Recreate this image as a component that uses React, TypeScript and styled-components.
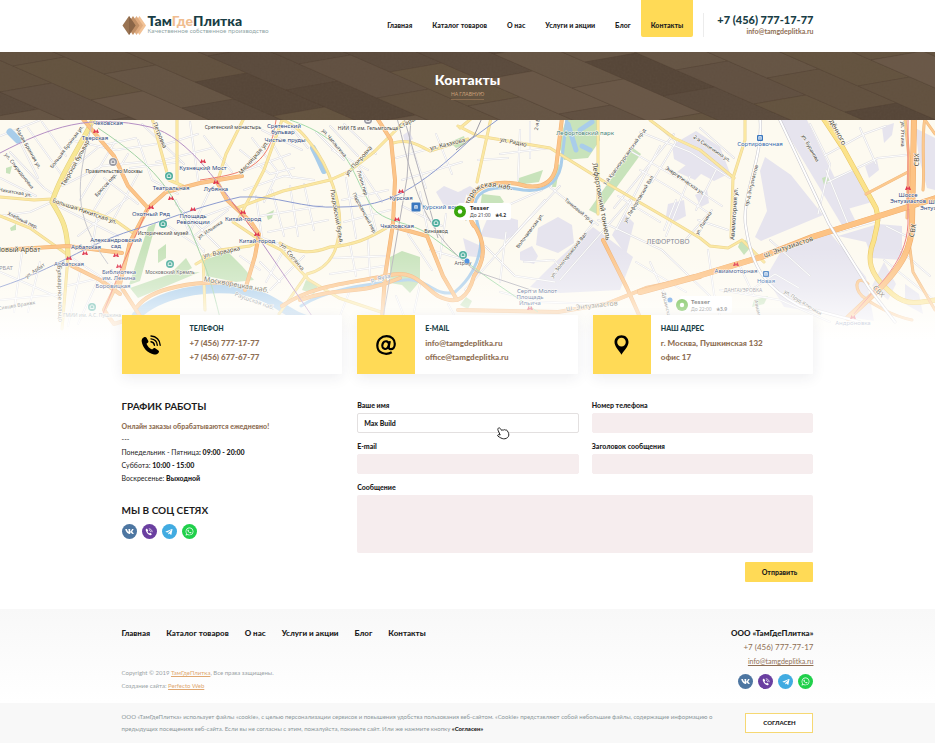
import React from 'react';
import styled, { createGlobalStyle } from 'styled-components';
import { FaVk, FaTelegramPlane, FaWhatsapp } from 'react-icons/fa';

const yellow = '#ffda56';
const brown = '#8f6f54';
const teal = '#183d45';

const GlobalStyle = createGlobalStyle`
  *, *::before, *::after { box-sizing: border-box; }
  body {
    margin: 0;
    background: #fff;
    color: #1c1c1c;
    font-family: Lato, "Open Sans", sans-serif;
    font-size: 7px;
    line-height: 13px;
  }
  h1, h2, h3, p, ul { margin: 0; padding: 0; }
  a { color: inherit; text-decoration: none; }
`;

/* ---------- shared layout ---------- */

const Page = styled.div`
  display: flex;
  flex-direction: column;
  min-height: 100vh;
`;

const gutter = '13%';

/* ---------- header ---------- */

const Header = styled.header`
  display: flex;
  align-items: flex-start;
  justify-content: space-between;
  height: 52px;
  padding: 0 ${gutter};
`;

const Brand = styled.a`
  display: flex;
  align-items: center;
  gap: 2px;
  padding-top: 14px;
`;

const BrandText = styled.span`
  display: flex;
  flex-direction: column;
`;

const BrandName = styled.strong`
  font-size: 14px;
  line-height: 13px;
  font-weight: 900;
  color: ${teal};
`;

const BrandAccent = styled.span`
  color: #f0bd90;
`;

const Tagline = styled.span`
  font-family: "Noto Sans", sans-serif;
  font-size: 6px;
  line-height: 9px;
  color: #8fa5a5;
`;

const HeaderRight = styled.div`
  display: flex;
  align-items: flex-start;
  gap: 10px;
`;

const Nav = styled.nav`
  display: flex;
`;

const NavLink = styled.a<{ $active?: boolean }>`
  padding: 19px 10px 5px;
  height: 37px;
  font-weight: 900;
  line-height: 13px;
  border-radius: 0 0 2px 2px;
  background: ${p => (p.$active ? yellow : 'transparent')};
`;

const HeaderContact = styled.address`
  display: flex;
  flex-direction: column;
  align-items: flex-end;
  margin-top: 13px;
  padding-left: 13px;
  border-left: 1px solid #ececec;
  font-style: normal;
  height: 24px;
`;

const HeaderPhone = styled.a`
  font-size: 11px;
  line-height: 14px;
  font-weight: 900;
  color: ${teal};
`;

const HeaderMail = styled.a`
  line-height: 9px;
  font-weight: 700;
  color: ${brown};
`;

/* ---------- title band ---------- */

const Hero = styled.section`
  display: grid;
  height: 68px;
  background: #5e4d3e;
  overflow: hidden;
  > * { grid-area: 1 / 1; }
`;

const HeroTexture = styled.svg`
  width: 100%;
  height: 68px;
`;

const HeroContent = styled.div`
  display: flex;
  flex-direction: column;
  align-items: center;
  padding-top: 18px;
  z-index: 1;
`;

const HeroTitle = styled.h1`
  font-size: 14px;
  line-height: 20px;
  font-weight: 900;
  color: #fff;
`;

const HeroLink = styled.a`
  font-size: 5px;
  line-height: 9px;
  color: #c9a07a;
  border-bottom: 1px solid #8a6c50;
`;

/* ---------- map ---------- */

const MapFrame = styled.section`
  height: 220px;
  overflow: hidden;
`;

const MapSvg = styled.svg`
  display: block;
  width: 100%;
  height: 220px;
  font-family: "Noto Sans", sans-serif;
`;

/* ---------- contact cards ---------- */

const Cards = styled.section`
  position: relative;
  display: grid;
  grid-template-columns: repeat(3, 1fr);
  gap: 15px;
  margin-top: -25px;
  padding: 0 ${gutter};
`;

const Card = styled.article`
  display: flex;
  min-height: 59px;
  background: #fff;
  border-radius: 1px;
  box-shadow: 0 4px 14px rgba(40, 40, 60, 0.08);
`;

const CardIcon = styled.div`
  display: flex;
  align-items: center;
  justify-content: center;
  width: 58px;
  background: ${yellow};
`;

const CardBody = styled.div`
  display: flex;
  flex-direction: column;
  padding: 6px 10px;
  font-size: 8px;
  line-height: 14px;
  font-weight: 900;
  color: ${brown};
`;

const CardTitle = styled.h3`
  margin-bottom: 1px;
  font-size: 7px;
  line-height: 14px;
  font-weight: 900;
  color: ${teal};
`;

/* ---------- main ---------- */

const Main = styled.main`
  display: grid;
  grid-template-columns: repeat(3, 1fr);
  gap: 15px;
  padding: 25px ${gutter} 27px;
`;

const Info = styled.section`
  display: flex;
  flex-direction: column;
`;

const SectionTitle = styled.h2`
  font-size: 10px;
  line-height: 15px;
  font-weight: 700;
  margin-bottom: 6px;
  color: #1c1c1c;
`;

const Schedule = styled.div`
  margin-bottom: 18px;
  font-size: 7px;
  line-height: 13px;
  b { font-weight: 900; }
`;

const Highlight = styled.p`
  font-weight: 900;
  color: ${brown};
`;

const Socials = styled.div`
  display: flex;
  gap: 5px;
`;

const SocialLink = styled.a<{ $color: string }>`
  display: flex;
  align-items: center;
  justify-content: center;
  width: 15px;
  height: 15px;
  border-radius: 50%;
  color: #fff;
  background: ${p => p.$color};
`;

const Form = styled.form`
  grid-column: span 2;
  display: grid;
  grid-template-columns: 1fr 1fr;
  column-gap: 13px;
  row-gap: 7px;
`;

const Field = styled.div<{ $wide?: boolean }>`
  grid-column: ${p => (p.$wide ? '1 / -1' : 'auto')};
  display: flex;
  flex-direction: column;
`;

const Label = styled.label`
  font-size: 7px;
  line-height: 12px;
  font-weight: 900;
  margin-bottom: 2px;
`;

const Input = styled.input`
  width: 100%;
  height: 20px;
  padding: 0 6px;
  border: 1px solid #f6edee;
  border-radius: 2px;
  background: #f6edee;
  font: 900 7px/13px Lato, sans-serif;
  color: #1c1c1c;
  outline: none;
  &:not(:placeholder-shown) {
    background: #fff;
    border-color: #e3e0e0;
  }
`;

const NameBox = styled.div`
  position: relative;
`;

const HandCursor = styled.svg`
  position: absolute;
  left: 63%;
  top: 14px;
`;

const TextArea = styled.textarea`
  width: 100%;
  height: 58px;
  padding: 6px;
  border: 0;
  border-radius: 2px;
  background: #f6edee;
  font: 700 7px/13px Lato, sans-serif;
  resize: none;
  outline: none;
`;

const Submit = styled.button`
  grid-column: 2;
  justify-self: end;
  width: 68px;
  height: 20px;
  margin-top: 2px;
  border: 0;
  border-radius: 1px;
  background: ${yellow};
  color: #1c1c1c;
  font: 900 7px/13px Lato, sans-serif;
`;

/* ---------- footer ---------- */

const Footer = styled.footer`
  display: flex;
  justify-content: space-between;
  height: 94px;
  padding: 17px ${gutter} 0;
  background: linear-gradient(#f8f8f8, #fff);
`;

const FooterLeft = styled.div`
  display: flex;
  flex-direction: column;
  justify-content: space-between;
  padding-bottom: 11px;
`;

const FooterNav = styled.nav`
  display: flex;
  gap: 16px;
  font-size: 8px;
  line-height: 14px;
  font-weight: 900;
`;

const Legal = styled.div`
  font-size: 6px;
  line-height: 13px;
  color: #9aa3a5;
  a { color: #e0a871; text-decoration: underline; }
`;

const FooterContact = styled.address`
  display: flex;
  flex-direction: column;
  align-items: flex-end;
  font-style: normal;
`;

const Company = styled.strong`
  font-size: 8px;
  line-height: 14px;
  font-weight: 900;
`;

const FooterPhone = styled.a`
  font-size: 8px;
  line-height: 14px;
  color: ${brown};
`;

const FooterMail = styled.a`
  margin-bottom: 6px;
  line-height: 14px;
  color: ${brown};
  text-decoration: underline;
`;

const CookieBar = styled.section`
  display: flex;
  flex: 1;
  align-items: center;
  justify-content: space-between;
  gap: 20px;
  min-height: 40px;
  padding: 0 ${gutter};
  background: #f8f8f8;
`;

const CookieText = styled.p`
  flex: 1;
  font-size: 6px;
  line-height: 12px;
  color: #8b979a;
  b { color: #1c1c1c; font-weight: 900; }
`;

const Agree = styled.button`
  width: 68px;
  height: 20px;
  border: 1px solid #f6d873;
  background: #fff;
  color: #1c1c1c;
  font: 900 6px/12px Lato, sans-serif;
`;

/* ---------- drawings ---------- */

const LogoMark = () => (
  <svg width="24" height="21" viewBox="0 0 24 21" aria-hidden="true">
    <path d="M17.500 1 24 10.500 17.500 20 11 10.500z" fill="#f2c296" />
    <path d="M14.500 1 21 10.500 14.500 20 8 10.500z" fill="#e0ac80" />
    <path d="M11 1 17.500 10.500 11 20 4.500 10.500z" fill="#c08f66" />
    <path d="M7 1 13.500 10.500 7 20 .5 10.500z" fill="#9a7453" />
    <path d="M7 1 13.500 10.500 7 20z" fill="#8a6547" />
  </svg>
);

const PhoneIcon = () => (
  <svg width="20" height="20" viewBox="0 0 20 20" aria-hidden="true">
    <path
      d="M3 2.200C1.200 3 .4 4.600.7 6.500c.9 6.300 6 11.800 12.300 13 1.900.4 3.700-.4 4.700-2 .5-.8.4-1.500-.3-2l-3.200-2.300c-.7-.5-1.400-.4-2 .2l-1.100 1.200c-2.600-1.100-4.600-3.200-5.600-5.800l1.300-1c.7-.5.8-1.200.4-2L5.500 2.700C5.100 1.900 4 1.700 3 2.200z"
      fill="#000"
    />
    <g fill="none" stroke="#000" strokeWidth="1.400" strokeLinecap="round">
      <path d="M10 1c5.200.3 9 4 9.200 9.200" />
      <path d="M10 3.900c3.600.3 6 2.700 6.300 6.300" />
      <path d="M10 6.800c2 .3 3.200 1.400 3.400 3.400" />
    </g>
  </svg>
);

const AtIcon = () => (
  <svg width="20" height="20" viewBox="0 0 20 20" aria-hidden="true" fill="none" stroke="#000">
    <path
      d="M15.800 17.200C10 20.600 1.300 18.400 1.300 10.400 1.300 5 5.300 1.200 10.600 1.200c4.800 0 8.200 3.100 8.200 7.500 0 3.400-1.700 5.500-4 5.500-1.700 0-2.300-1.100-2-2.800l1-5.300"
      strokeWidth="2.200"
    />
    <ellipse cx="9.600" cy="10.100" rx="3.200" ry="3.900" transform="rotate(18 9.600 10.100)" strokeWidth="2.200" />
  </svg>
);

const PinIcon = () => (
  <svg width="15" height="20" viewBox="0 0 15 20" aria-hidden="true">
    <path
      fillRule="evenodd"
      d="M7.500.2C3.500.2.500 3.100.500 7c0 4.700 4.500 8.200 7 12.800C10 15.200 14.500 11.700 14.500 7c0-3.900-3-6.800-7-6.800zm0 2.600a4.300 4.300 0 1 1 0 8.600 4.300 4.300 0 0 1 0-8.600z"
      fill="#000"
    />
  </svg>
);

const ViberGlyph = () => (
  <svg width="8" height="8" viewBox="0 0 20 20" aria-hidden="true">
    <path
      d="M3.400 2C2 3 1.500 4 2 6c1.600 5.600 5.600 10 11 12 1.600.5 2.600-.1 3.600-1.600.6-1 .5-1.600-.3-2.200l-2.600-1.900c-.8-.5-1.400-.3-2 .4l-.9 1c-2.200-.9-3.900-2.800-4.700-5l1.100-.8c.7-.5.9-1.200.4-2L5.700 2.500C5.200 1.700 4.200 1.400 3.400 2z"
      fill="#fff"
    />
    <g fill="none" stroke="#fff" strokeWidth="1.800" strokeLinecap="round">
      <path d="M10.500 2c4.200.3 7.200 3.200 7.400 7.500" />
      <path d="M11 5.800c2 .3 3 1.400 3.200 3.400" />
    </g>
  </svg>
);

const SocialRow = () => (
  <Socials>
    <SocialLink href="#vk" aria-label="VK" $color="#4d76a1"><FaVk size={9} /></SocialLink>
    <SocialLink href="#viber" aria-label="Viber" $color="#6a3fa0"><ViberGlyph /></SocialLink>
    <SocialLink href="#telegram" aria-label="Telegram" $color="#41abe1"><FaTelegramPlane size={8} /></SocialLink>
    <SocialLink href="#whatsapp" aria-label="WhatsApp" $color="#20d04b"><FaWhatsapp size={9} /></SocialLink>
  </Socials>
);

const tones = ['#665544', '#5a4a3c', '#62513f', '#6a5847', '#554537', '#615041', '#64533f'];

/* Slanted paving stones: each strip runs down to the right, every other one shifted by half a stone. */
const stones = Array.from({ length: 20 }, (_, j) => j - 3).flatMap(j => {
  const first = Math.floor((9 * j - 110) / 34);
  return Array.from({ length: 7 }, (_, k) => {
    const i = first + k + (j % 2 ? 0.5 : 0);
    return { x: Math.round(52 * j + 78 * i), y: Math.round(40 - 9 * j + 34 * i), tone: Math.abs(j * 5 + k * 3 + ((j * k) % 4)) % tones.length };
  });
});

const TileTexture = () => (
  <HeroTexture viewBox="0 0 935 68" preserveAspectRatio="xMidYMid slice" aria-hidden="true">
    <defs>
      <filter id="grain" x="0" y="0" width="100%" height="100%">
        <feTurbulence type="fractalNoise" baseFrequency="0.5" numOctaves="2" seed="4" />
        <feColorMatrix values="0 0 0 0 0.15  0 0 0 0 0.11  0 0 0 0 0.08  0 0 0 0.5 0" />
      </filter>
    </defs>
    {stones.map(s => (
      <path key={`${s.x} ${s.y}`} d={`M${s.x} ${s.y}l52 -9 78 34 -52 9z`} fill={tones[s.tone]} stroke="#4c3d30" strokeOpacity="0.5" strokeWidth="0.600" />
    ))}
    <rect width="935" height="68" filter="url(#grain)" opacity="0.450" />
  </HeroTexture>
);

const lavender = [
  'M593 227l40 30-13 33-60 3-30-6 18-18z',
  'M538 228l20-11 14 8 2 18-16 10-22-8z',
  'M520 252l12-6 6 10-4 8-14-4z',
  'M490 212l28 8 0 12-12 8-26-4z',
  'M463 238l18 8 4 12-18-2z',
  'M672 145l24-14 24 16 10 26-16 8-40-22z',
  'M668 204l16-4 2 16-12 6-8-6z',
  'M612 235l12-22 10 10-8 32z',
  'M765 157l26 18 32 40-62 26-6-4 12-26-7-40z',
  'M779 120h28l48 100-12 7z',
  'M832 178l26-10 14 34-28 8z',
  'M838 236l40-12 24 2v34l-30-2-6-16z',
  'M780 253l50-20 36 44 8 44-90-14-18-30z',
  'M865 166l12-6 2 10-10 8z',
  'M882 127l12-4-2 12-8 8z',
  'M915 128l20 10v52l-8-2-8-30z',
  'M884 262l12 22-8 16-16-14z',
  'M905 284l14 10 4 20-18-10z',
  'M436 192l8-6 14 6 10-4-4 16-20 2z',
  'M462 190l8-4 6 4-6 8z',
  'M695 158l16 6-16 16-18-8z',
  'M695 195l12-6 2 14-8 4z',
  'M403 135l6-4 4 8-8 4z',
];

const greens = [
  'M566 120h32l2 20-12 18-24 2-6-16z',
  'M633 148l8 6-44 60-8-4z',
  'M519 178l24-8-4 12-22 3z',
  'M482 194l18 2 4 6-14 8-10-2z',
  'M148 227l8-4-16 58-11 4z',
  'M158 250l8-6 0 14-8 5z',
  'M170 274l16-16 6 10-20 12z',
  'M130 288l40-14 30-2-62 26z',
  'M204 260l24-8 14 14 12 14-18 2-30-6z',
  'M390 257l12-6 18 6 0 24-10 12-8-8-12-2z',
  'M306 280l12 6-4 8-12-4z',
  'M266 214l8-4-2 8-4 2z',
  'M822 178l6-2 2 6-6 3z',
  'M740 242l6-2 4 8-6 7-6-8z',
  'M460 305l6-8 6 4-4 8z',
  'M754 300l14-4-4 8-12 3z',
  'M6 168l6-2-2 8-4-1z',
  'M10 228l6-4 0 6-5 1z',
  'M555 163l5 2-4 22-4 0z',
  'M450 142l14-6 2 8-10 4z',
];

const minorRoads = [
  'M0 136L40 120', 'M10 152l34 36 12 8', 'M18 138l20 40', 'M28 128l36 50', 'M42 122l24 34', 'M0 178l36 18', 'M0 216l30-4 22-10',
  'M70 170l30-24 36-8', 'M62 186l40-20 40-4', 'M80 200l36-60', 'M94 210l34-56', 'M112 222l26-48', 'M70 140l46 10 40-6', 'M58 206l60 30',
  'M78 236l50-38', 'M92 248l6-36', 'M104 178l34 26', 'M138 140l14 40 26 14', 'M142 124l42 40', 'M160 146l38-12', 'M190 122l8 58', 'M204 136l28 36',
  'M156 162l56-14', 'M130 168l50-6', 'M210 190l-20 42 14 20', 'M176 200l14 34', 'M188 222l44-16', 'M194 236l34-26', 'M168 226l36 24', 'M176 204l46 46',
  'M72 258l40 26', 'M66 286l34-8', 'M40 262l-12 50', 'M22 252l-8 60', 'M0 272l60 26', 'M0 300l62-6', 'M80 272l-12 54', 'M98 280l-20 44', 'M118 286l24 30',
  'M240 150l30 24 24-6', 'M252 138l26 34-14 30', 'M272 142l20 36', 'M246 170l44-16', 'M262 130l40 20', 'M244 190l40-14 30 4', 'M256 196l6 42 40 14', 'M272 190l12 46',
  'M290 186l8 50', 'M304 184l10 46', 'M260 216l62-10', 'M268 232l60-12', 'M316 132l28 28', 'M330 126l28 30', 'M344 124l32 30', 'M332 150l36 20', 'M358 166l24 36',
  'M346 178l10 60', 'M362 174l14 56', 'M342 200l46-10', 'M344 222l46-12', 'M350 244l6 32', 'M368 240l2 36', 'M332 258l54-2', 'M330 274l54-8', 'M286 246l-20 36', 'M304 256l-34 34',
  'M308 148l-18 -22', 'M396 158l50-14', 'M402 180l60-18', 'M410 142l16 46', 'M436 134l16 40', 'M402 206l40 20', 'M420 192l8 40', 'M408 234l24 36', 'M446 214l-6 44', 'M430 250l36 10',
  'M520 130l-2 50', 'M530 122v36', 'M500 154l50-6', 'M478 160l30-2', 'M506 206l36-16', 'M500 250l60-64', 'M506 232l-6 50', 'M485 246l30 30 40 6', 'M550 187l48 38', 'M545 200l-80 90',
  'M524 262l30-2 6 8', 'M560 280l70-80', 'M598 220l64 30 50 48', 'M614 208l60-74', 'M594 222l-40 50', 'M640 170l34 20 36 24', 'M618 196l42 26', 'M660 146l-44 84', 'M676 200l-12 30',
  'M632 152l60 34 30 20', 'M640 132l50 20 40 26', 'M656 124l20 18-24 40', 'M690 176l-24 60', 'M650 262l18 40', 'M636 262l50 30', 'M712 210l-30 34',
  'M700 128l34 30', 'M696 210l20-40', 'M698 220l30 10', 'M708 250l6 44 8 30', 'M738 262l16 34', 'M745 294l30-20 24 14', 'M770 240l40 36', 'M824 156l40-22 22-8', 'M828 182l50-24 38-4',
  'M826 170l22 54', 'M818 214l12-50-20-40', 'M860 128l16 36', 'M838 232l42 -12', 'M886 226l20 10', 'M884 260l50 40', 'M900 250l30 26', 'M720 290l60 10 50 22', 'M500 292l40 10 60 2',
  'M396 296l8 20', 'M420 284l-6 28', 'M448 304l10 18', 'M350 290l-10 26', 'M260 262l20 20', 'M240 256l20 14',
];

const yellowRoads = [
  'M94 118C78 150 60 176 52 202c8 14 16 22 16 55l-6 72',
  'M0 197l34 3 18-1', 'M52 202l38 9 26 10 17 12', 'M0 216l30 12 38 27',
  'M177 118v64', 'M152 118l17 62 14 6', 'M244 118l-18 36-8 26', 'M203 256l2 54', 'M196 264l24-14 30-4 12-6',
  'M283 120c16 8 20 14 28 24 18 22 32 62 28 88-2 24-14 38-32 42l-28 40',
  'M237 208l46-17 47-11 18-8 26-20 30-30', 'M280 243c18 12 34 10 50 4 24-2 38-8 58-20',
  'M233 222l24 16 24 12 28 30 30 18 42 14', 'M282 120l-18 50-26 50', 'M393 143c14-4 22 0 37 8l38-12',
  'M458 126l20 10 72 12 58 36 62 36 30 18 10 8 18 2 14-8 22 22', 'M491 118l-14 64', 'M598 118v96',
  'M650 120l24 18 26 12 34 28', 'M745 118v22l-12 38-2 60', 'M460 128l12-10',
];

const wideYellow = ['M823 118l20 30 33 60c4 14 0 20-2 32-8 20-4 34 14 50 18 18 30 12 48 10'];

const orangeRoads = [
  'M82 118l32 38 14 30 20 22', 'M242 176l-42 7-34 9-18 16-18 34-10 42', 'M0 250l68-4 54 7', 'M68 264l32 16 20 14', 'M104 310l14-28 22 34-26 8z',
  'M217 182l10 18 24 22 8 12-4 22-10 34', 'M137 307c14-20 60-26 94-24',
  'M377 118l14 22 4 40-2 44-8 52-3 44', 'M391 226l36 10 16 40 14 24', 'M282 306c30-20 60-22 104-30 30-8 36 10 52 20 20 10 30 2 36-20 14-20 10-38-2-54',
  'M562 118l-6 50c-4 16-16 20-30 18-20-6-42-4-52 8-6 14-4 28 0 32',
  'M603 240l24 48 16 36', 'M458 310l100 2 48-8 40-16 54-11',
  'M300 300c40-14 60-4 100-22',
];

const wideOrange = ['M640 292l55-15 66-20 51-20 64-20 60-19', 'M914 118l-2 104c0 30-14 48-34 68l-30 28'];

const sideOrange = ['M905 118l4 40-2 60', 'M925 118c-4 20 0 50-2 72', 'M909 242l4 30 22 38', 'M868 284c-10-10-16 2-6 12 10 8 30 20 50 24', 'M866 194l42-22', 'M925 120l10 14'];

const metro = [
  [96, 131], [203, 161], [216, 182], [171, 198], [151, 207], [193, 209], [243, 212], [257, 234], [69, 258], [85, 253], [116, 255], [119, 266],
  [401, 191], [397, 219], [736, 264], [908, 188], [853, 317], [530, 308],
];

type LabelSpec = { t: string; x: number; y: number; c?: string; s?: number; r?: number };
const street = '#4d4630';
const station = '#2c477f';
const district = '#85858f';

const labels: LabelSpec[] = [
  { t: 'Чеховская', x: 108, y: 125, c: station }, { t: 'Тверская', x: 95, y: 140, c: station },
  { t: 'Кузнецкий Мост', x: 203, y: 170, c: station }, { t: 'Лубянка', x: 216, y: 191, c: station },
  { t: 'Театральная', x: 171, y: 190, c: station }, { t: 'Охотный Ряд', x: 151, y: 216, c: station },
  { t: 'Площадь', x: 193, y: 218, c: station }, { t: 'Революции', x: 193, y: 224, c: station },
  { t: 'Китай-город', x: 243, y: 221, c: station }, { t: 'Китай-город', x: 257, y: 243, c: station },
  { t: 'Александровский', x: 116, y: 242, c: station }, { t: 'сад', x: 116, y: 248, c: station },
  { t: 'Арбатская', x: 86, y: 249, c: station }, { t: 'Арбатская', x: 69, y: 266, c: station },
  { t: 'Библиотека', x: 119, y: 274, c: station }, { t: 'им. Ленина', x: 119, y: 280, c: station }, { t: 'Боровицкая', x: 113, y: 288, c: station },
  { t: 'Сретенский', x: 284, y: 128, c: station }, { t: 'бульвар', x: 283, y: 134, c: station }, { t: 'Чистые пруды', x: 285, y: 142, c: station },
  { t: 'Курская', x: 401, y: 200, c: station }, { t: 'Чкаловская', x: 397, y: 228, c: station }, { t: 'Курский вокзал', x: 445, y: 209, c: '#2f68ad' },
  { t: 'Сортировочная', x: 760, y: 146, c: '#2f68ad' }, { t: 'Авиамоторная', x: 736, y: 273, c: station }, { t: 'Новая', x: 766, y: 283, c: '#2f68ad' },
  { t: 'Шоссе', x: 908, y: 197, c: station }, { t: 'Энтузиастов', x: 908, y: 203, c: station }, { t: 'Шоссе', x: 938, y: 204, c: station }, { t: 'Энтузиастов', x: 938, y: 210, c: station },
  { t: 'Серп и Молот', x: 537, y: 293, c: station }, { t: 'Площадь', x: 530, y: 299, c: station }, { t: 'Ильича', x: 530, y: 305, c: station },
  { t: 'Андроновка', x: 853, y: 325, c: station },
  { t: 'Сретенский монастырь', x: 233, y: 129, s: 5 }, { t: 'НИИ ГБ им. Гельмгольца', x: 368, y: 130, s: 5 },
  { t: 'Правительство Москвы', x: 114, y: 173, s: 5 }, { t: 'Исторический музей', x: 163, y: 235, s: 5 }, { t: 'Московский Кремль', x: 170, y: 274, s: 5 },
  { t: 'ГМИИ им. А.С. Пушкина', x: 92, y: 317, s: 5, c: '#6f7f86' }, { t: 'Винзавод', x: 436, y: 233, s: 5 }, { t: 'Artplay', x: 463, y: 265, s: 5 },
  { t: 'ЛЕФОРТОВО', x: 668, y: 244, c: district, s: 7 }, { t: 'ДАНГАУЭРОВКА', x: 743, y: 292, c: district, s: 5 }, { t: 'АРБАТ', x: 4, y: 270, c: district },
  { t: 'Новый Арбат', x: 18, y: 252, c: street, s: 7 }, { t: 'ул. Спиридоновка', x: 18, y: 172, r: 52, s: 5 }, { t: 'Малая Бронная ул.', x: 27, y: 149, r: 60, s: 5 },
  { t: 'Большая Бронная ул.', x: 68, y: 148, r: -53, s: 5 }, { t: 'Тверской бульвар', x: 77, y: 164, r: -61, c: street }, { t: 'Никитская ул.', x: 15, y: 194, r: 10, s: 5 },
  { t: 'Хлебный пер.', x: 22, y: 222, r: 26, s: 5 }, { t: 'Большая Никитская ул.', x: 84, y: 213, r: 19, c: street }, { t: 'Брюсов пер.', x: 107, y: 186, r: -48, s: 5 },
  { t: 'Петровка', x: 158, y: 136, r: 68, c: street }, { t: 'Мясницкая ул.', x: 255, y: 159, r: -49, c: street }, { t: 'ул. Ильинка', x: 211, y: 231, r: -34, s: 5 },
  { t: 'ул. Варварка', x: 222, y: 254, r: -12, c: street }, { t: 'ул. Арбат', x: 36, y: 272, r: -34, s: 5 }, { t: 'Москворецкая наб.', x: 236, y: 287, r: 10, c: street, s: 7 },
  { t: 'Раушская наб.', x: 254, y: 303, r: 20, c: '#777e86' }, { t: 'Бульварное кольцо', x: 58, y: 294, r: 89, c: street }, { t: 'Сивцев Вражек', x: 17, y: 307, r: -9, s: 5 },
  { t: 'ул. Солянка', x: 291, y: 258, r: 51, c: street }, { t: 'Покровский бульв.', x: 335, y: 217, r: 80, c: street }, { t: 'ул. Покровка', x: 360, y: 162, r: -48, c: street },
  { t: 'ул. Чаплыгина', x: 333, y: 144, r: 50, s: 5 }, { t: 'Лялин пер.', x: 361, y: 184, r: 73, s: 5 }, { t: 'Подсосенский пер.', x: 363, y: 214, r: 62, s: 5 },
  { t: 'ул. Казакова', x: 448, y: 146, r: -14, c: street }, { t: 'р. Яуза', x: 381, y: 280, r: -14, c: '#6c85ad' }, { t: 'Старая Басманная', x: 424, y: 116, r: -28, c: street },
  { t: 'ул. Радио', x: 513, y: 144, r: 12, c: street }, { t: '2-я Бауманская', x: 541, y: 112, r: -80, s: 5 }, { t: 'Лефортовский парк', x: 585, y: 135, c: '#3c8076' },
  { t: 'Лефортовский тоннель', x: 599, y: 202, r: 80, c: street, s: 7 },
  { t: '1-й Краснокурсантский пр-д', x: 626, y: 158, r: -54, s: 5 }, { t: 'Танковый пр-д', x: 578, y: 212, r: 40, s: 5 }, { t: 'Волочаевская ул.', x: 531, y: 232, r: -53, s: 5 },
  { t: 'ул. Золоторожский Вал', x: 570, y: 256, r: -52, s: 5 }, { t: 'ул. Лефортовский Вал', x: 640, y: 200, r: -59, s: 5 }, { t: 'Энергетическая ул.', x: 684, y: 182, r: 35, s: 5 },
  { t: 'ш. Энтузиастов', x: 592, y: 308, r: -6, c: street, s: 7 }, { t: 'ш. Энтузиастов', x: 789, y: 249, r: -19, c: street, s: 7 }, { t: '2-я Синичкина ул.', x: 711, y: 150, r: 34, s: 5 },
  { t: 'ул. Лапина', x: 705, y: 224, r: -58, s: 5 }, { t: 'Авиамоторная ул.', x: 736, y: 214, r: -86 }, { t: 'пр-д Энтузиастов', x: 753, y: 186, r: -76, s: 5 },
  { t: 'ул. Буракова', x: 809, y: 149, r: 61, s: 5 }, { t: 'Будённого', x: 834, y: 130, r: 62, c: street, s: 7 }, { t: 'ул. Уткина', x: 901, y: 134, r: 90, s: 5 },
  { t: 'СВХ', x: 919, y: 160, r: -88, c: street, s: 7 }, { t: 'СВХ', x: 915, y: 231, r: -80, c: street, s: 7 }, { t: 'СВХ', x: 877, y: 293, r: 48, c: street, s: 7 },
  { t: 'ул. Пруд-Ключики', x: 802, y: 304, r: 32, s: 5 }, { t: 'Душинская', x: 665, y: 306, r: 78, s: 5 }, { t: 'Авиамоторная', x: 758, y: 318, r: 78, s: 5 },
];

const Poi = ({ x, y, color = '#4fae9d' }: { x: number; y: number; color?: string }) => (
  <g transform={`translate(${x} ${y})`}>
    <circle r="4.500" fill="#fff" />
    <circle r="4" fill={color} />
    <path d="M-1.800 1.500v-2.500l1.800-1.200 1.800 1.200v2.500z" fill="none" stroke="#fff" strokeWidth="0.800" />
  </g>
);

const RailStop = ({ x, y, s = 6 }: { x: number; y: number; s?: number }) => (
  <g transform={`translate(${x} ${y})`}>
    <rect x={-s / 2} y={-s / 2} width={s} height={s} rx="1" fill="#3b78bf" />
    <path d="M-1.300-1.500h2.600v2.500h-2.600zM-1.300-.2h2.600M-1.500 2l.6-.8M1.500 2l-.6-.8" fill="none" stroke="#fff" strokeWidth="0.700" />
  </g>
);

const Roads = ({ d, w, fill, edge }: { d: string[]; w: number; fill: string; edge: string }) => (
  <g fill="none" strokeLinejoin="round" strokeLinecap="round">
    {d.map((p, i) => <path key={`e${i}`} d={p} stroke={edge} strokeWidth={w + 1} />)}
    {d.map((p, i) => <path key={`f${i}`} d={p} stroke={fill} strokeWidth={w} />)}
  </g>
);

const CityMap = () => (
  <MapSvg viewBox="0 120 935 220" preserveAspectRatio="xMidYMin slice" role="img" aria-label="Карта Москвы">
    <defs>
      <linearGradient id="fade" x1="0" y1="0" x2="0" y2="1">
        <stop offset="0.580" stopColor="#fff" stopOpacity="0" />
        <stop offset="0.750" stopColor="#fff" stopOpacity="0.300" />
        <stop offset="0.880" stopColor="#fff" stopOpacity="0.650" />
        <stop offset="1" stopColor="#fff" stopOpacity="1" />
      </linearGradient>
      <path id="embankment" d="M466 244C464 205 472 184 494 187L512 190" />
    </defs>
    <rect y="120" width="935" height="220" fill="#fdfaf0" />
    {lavender.map(d => <path key={d} d={d} fill="#e6e4ee" />)}
    {greens.map(d => <path key={d} d={d} fill="#c8e3bb" />)}
    <Roads d={minorRoads} w={1} fill="#fff" edge="#e0dfe3" />
    <g fill="none" stroke="#a9cdea" strokeLinecap="round">
      <path d="M136 316c24-24 70-30 104-26 40 8 44 26 76 32" strokeWidth="9" />
      <path d="M567 118l-6 48c-4 20-20 26-38 24-30-6-46 0-48 14 0 16 4 24 6 34 0 26-14 44-26 54-20 6-26-14-50-12-40 4-80 10-104 26" strokeWidth="3" />
      <path d="M313 148l5 10 6 13" strokeWidth="6" />
      <path d="M10 132l8 8" strokeWidth="7" />
      <path d="M568 124l8 26M582 146l8 4M580 130l12-8" strokeWidth="5" />
    </g>
    <Roads d={yellowRoads} w={2} fill="#fbe8a2" edge="#ecd491" />
    <Roads d={wideYellow} w={4} fill="#fbe38b" edge="#e8c566" />
    <Roads d={['M94 118C78 150 60 176 52 202c8 14 16 22 16 55']} w={4} fill="#f8e795" edge="#e2cf7a" />
    <Roads d={orangeRoads} w={3} fill="#fcc58a" edge="#f0b173" />
    <Roads d={sideOrange} w={2} fill="#fcc98f" edge="#eeb77c" />
    <Roads d={wideOrange} w={5} fill="#fdc384" edge="#eeaa69" />
    <g fill="none" strokeWidth="1">
      <path d="M0 287c60-20 80-40 133-57 40-12 60-22 107-33 40-2 60 12 100 10 50 0 80-20 130-67l30-22" stroke="#8c9bd0" />
      <path d="M0 153c50-26 90-40 150-26 40 10 70 60 104 104l60 88" stroke="#b58fc4" />
      <path d="M98 128c60 40 70 60 92 100 20 50 20 50 30 90" stroke="#a3d3a5" />
      <path d="M290 120c60 20 60 50 78 80 10 24 40 20 60 34l60 44 50 34" stroke="#a5dbaa" />
      <path d="M232 202l24 32M200 180c40-6 70-10 76-60M148 208l-26 58-20 50" stroke="#ef7d6c" />
      <path d="M908 118v106c-2 40-30 60-54 90" stroke="#ef8080" />
      <path d="M92 124c-16 60-20 90 16 140" stroke="#c9c9cf" />
      <path d="M397 118c16 60 20 110 80 154l60 20M411 118l-4 60-24 140M404 118l34 120" stroke="#b5b3ba" />
      <path d="M456 150l18-14 8-18" stroke="#9a98a2" />
    </g>
    <Roads d={['M779 118l50 106 40 64 26 34', 'M760 118c4 40-20 80-14 110 6 40 20 60 54 78l60 16']} w={2} fill="#fff" edge="#c6c5cc" />
    <g stroke="#fffdf6" strokeWidth="1" paintOrder="stroke" strokeLinejoin="round" textAnchor="middle">
      {labels.map((l, i) => (
        <text key={i} fontSize={l.s ?? 6} fill={l.c ?? '#3c3c3c'} transform={`translate(${l.x} ${l.y}) rotate(${l.r ?? 0})`}>{l.t}</text>
      ))}
    </g>
    <text fontSize="7" fill={street} stroke="#fffdf6" strokeWidth="1" paintOrder="stroke" textAnchor="end">
      <textPath href="#embankment" startOffset="100%">Золоторожская наб.</textPath>
    </text>
    {metro.map(([x, y]) => (
      <path key={`${x}-${y}`} transform={`translate(${x} ${y})`} d="M-3 2l1.600-4L0 .4l1.400-2.400L3 2H1.200L.9.800 0 2.200-.9.800-1.200 2z" fill="#e0374f" />
    ))}
    <Poi x={169} y={176} /><Poi x={163} y={224} /><Poi x={170} y={264} /><Poi x={92} y={307} />
    <Poi x={436} y={223} /><Poi x={463} y={255} /><Poi x={113} y={162} color="#9b9ba3" /><Poi x={368} y={120} color="#9b9ba3" />
    <RailStop x={416} y={207} s={9} /><RailStop x={760} y={138} /><RailStop x={766} y={274} />
    <circle cx="467" cy="261" r="2.500" fill="#3c86dd" /><circle cx="670" cy="300" r="2.500" fill="#3c86dd" />
    <rect x="458" y="203" width="53" height="17" rx="2" fill="#fff" />
    <circle cx="460" cy="211.500" r="6" fill="#3aa60c" /><circle cx="460" cy="211.500" r="2.200" fill="#fff" />
    <text x="470" y="210" fontSize="6" fontWeight="700" fill="#222">Tesser</text>
    <text x="470" y="217" fontSize="5" fill="#444">До 21:00</text>
    <text x="495" y="217" fontSize="5" fontWeight="700" fill="#333">★4.2</text>
    <rect x="680" y="296" width="52" height="17" rx="2" fill="#fff" />
    <circle cx="682" cy="305" r="6" fill="#3aa60c" /><circle cx="682" cy="305" r="2.200" fill="#fff" />
    <text x="691" y="304" fontSize="6" fontWeight="700" fill="#222">Tesser</text>
    <text x="691" y="311" fontSize="5" fill="#444">До 22:00</text>
    <text x="716" y="311" fontSize="5" fontWeight="700" fill="#333">★3.9</text>
    <rect y="120" width="935" height="220" fill="url(#fade)" />
  </MapSvg>
);

const menu = ['Главная', 'Каталог товаров', 'О нас', 'Услуги и акции', 'Блог', 'Контакты'];

export default function App() {
  return (
    <Page>
      <GlobalStyle />
      <Header>
        <Brand href="#home">
          <LogoMark />
          <BrandText>
            <BrandName>Там<BrandAccent>Где</BrandAccent>Плитка</BrandName>
            <Tagline>Качественное собственное производство</Tagline>
          </BrandText>
        </Brand>
        <HeaderRight>
          <Nav>
            {menu.map(item => <NavLink key={item} href="#page" $active={item === 'Контакты'}>{item}</NavLink>)}
          </Nav>
          <HeaderContact>
            <HeaderPhone href="tel:+74567771777">+7 (456) 777-17-77</HeaderPhone>
            <HeaderMail href="mailto:info@tamgdeplitka.ru">info@tamgdeplitka.ru</HeaderMail>
          </HeaderContact>
        </HeaderRight>
      </Header>

      <Hero>
        <TileTexture />
        <HeroContent>
          <HeroTitle>Контакты</HeroTitle>
          <HeroLink href="#home">НА ГЛАВНУЮ</HeroLink>
        </HeroContent>
      </Hero>

      <MapFrame><CityMap /></MapFrame>

      <Cards>
        <Card>
          <CardIcon><PhoneIcon /></CardIcon>
          <CardBody>
            <CardTitle>ТЕЛЕФОН</CardTitle>
            <a href="tel:+74567771777">+7 (456) 777-17-77</a>
            <a href="tel:+74566776777">+7 (456) 677-67-77</a>
          </CardBody>
        </Card>
        <Card>
          <CardIcon><AtIcon /></CardIcon>
          <CardBody>
            <CardTitle>E-MAIL</CardTitle>
            <a href="mailto:info@tamgdeplitka.ru">info@tamgdeplitka.ru</a>
            <a href="mailto:office@tamgdeplitka.ru">office@tamgdeplitka.ru</a>
          </CardBody>
        </Card>
        <Card>
          <CardIcon><PinIcon /></CardIcon>
          <CardBody>
            <CardTitle>НАШ АДРЕС</CardTitle>
            <span>г. Москва, Пушкинская 132</span>
            <span>офис 17</span>
          </CardBody>
        </Card>
      </Cards>

      <Main>
        <Info>
          <SectionTitle>ГРАФИК РАБОТЫ</SectionTitle>
          <Schedule>
            <Highlight>Онлайн заказы обрабатываются ежедневно!</Highlight>
            <p>---</p>
            <p>Понедельник - Пятница<b>: 09:00 - 20:00</b></p>
            <p>Суббота: <b>10:00 - 15:00</b></p>
            <p>Воскресенье: <b>Выходной</b></p>
          </Schedule>
          <SectionTitle>МЫ В СОЦ СЕТЯХ</SectionTitle>
          <SocialRow />
        </Info>
        <Form>
          <Field>
            <Label htmlFor="name">Ваше имя</Label>
            <NameBox>
              <Input id="name" defaultValue="Max Build" placeholder=" " />
              <HandCursor width="13" height="13" viewBox="0 0 13 13" aria-hidden="true">
                <path
                  d="M1.300 1.200c.8-.6 1.500-.3 2 .3l1.500 2c.5-.8 1.300-.9 1.900-.4.6-.6 1.500-.6 2 .1.700-.3 1.500 0 1.700.8 1.300 1.700 1.900 3.700 1 5.500-1 1.600-2.900 2.500-5 2.300C4.800 11.600 3 10.600 1 9.200.2 8.400.9 7.400 1.900 7.600l1.300.4L1 3.200c-.3-.7-.3-1.500.3-2z"
                  fill="#fff" stroke="#222" strokeWidth="1"
                />
              </HandCursor>
            </NameBox>
          </Field>
          <Field>
            <Label htmlFor="phone">Номер телефона</Label>
            <Input id="phone" type="tel" placeholder=" " />
          </Field>
          <Field>
            <Label htmlFor="email">E-mail</Label>
            <Input id="email" type="email" placeholder=" " />
          </Field>
          <Field>
            <Label htmlFor="subject">Заголовок сообщения</Label>
            <Input id="subject" placeholder=" " />
          </Field>
          <Field $wide>
            <Label htmlFor="message">Сообщение</Label>
            <TextArea id="message" />
          </Field>
          <Submit type="button">Отправить</Submit>
        </Form>
      </Main>

      <Footer>
        <FooterLeft>
          <FooterNav>{menu.map(item => <a key={item} href="#page">{item}</a>)}</FooterNav>
          <Legal>
            <p>Copyright © 2019 <a href="#home">ТамГдеПлитка</a>, Все права защищены.</p>
            <p>Создание сайта: <a href="#studio">Perfecto Web</a></p>
          </Legal>
        </FooterLeft>
        <FooterContact>
          <Company>ООО «ТамГдеПлитка»</Company>
          <FooterPhone href="tel:+74567777717">+7 (456) 777-77-17</FooterPhone>
          <FooterMail href="mailto:info@tamgdeplitka.ru">info@tamgdeplitka.ru</FooterMail>
          <SocialRow />
        </FooterContact>
      </Footer>

      <CookieBar>
        <CookieText>
          ООО «ТамГдеПлитка» использует файлы «cookie», с целью персонализации сервисов и повышения удобства пользования веб-сайтом. «Cookie» представляют собой небольшие файлы, содержащие информацию о предыдущих посещениях веб-сайта. Если вы не согласны с этим, пожалуйста, покиньте сайт. Или же нажмите кнопку <b>«Согласен»</b>
        </CookieText>
        <Agree type="button">СОГЛАСЕН</Agree>
      </CookieBar>
    </Page>
  );
}
